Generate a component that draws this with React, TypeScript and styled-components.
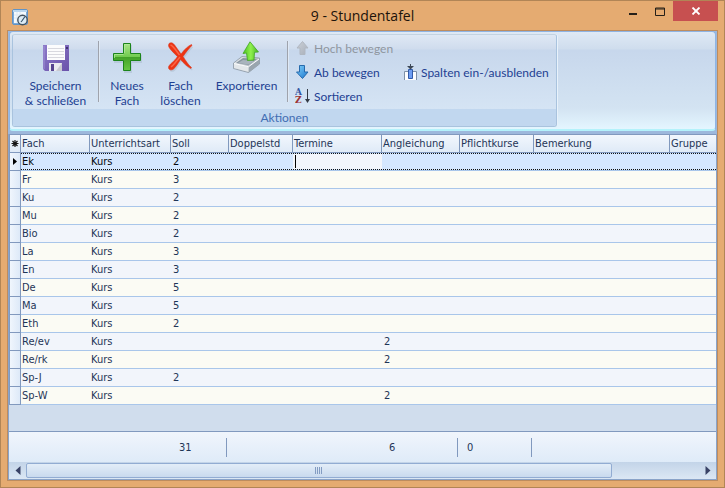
import React from "react";
import styled, { createGlobalStyle, css } from "styled-components";

const uiFont = '"Open Sans", "Noto Sans", sans-serif';
const ribbonFont = 'Lato, "Open Sans", sans-serif';
const gridFont = '"DejaVu Sans Condensed", "DejaVu Sans", sans-serif';
const line = "#8aa3c8";

const GlobalStyle = createGlobalStyle`
  * { box-sizing: border-box; }
  body { margin: 0; background: #e5ab71; font-family: ${uiFont}; }
  button { border: 0; padding: 0; margin: 0; background: none; font: inherit; color: inherit; cursor: default; }
  svg { display: block; flex: none; }
`;

const Window = styled.div`
  display: flex;
  flex-direction: column;
  min-height: 100vh;
  padding: 0 6px 6px;
  border: 1px solid #b18556;
  background: #e5ab71;
`;

const TitleBar = styled.header`
  display: grid;
  grid-template-columns: 100px 1fr 100px;
  height: 29px;
`;

const AppIcon = styled.div`
  padding: 8px 0 0 5px;
`;

const Title = styled.h1`
  margin: 0;
  padding-top: 4px;
  font-size: 14px;
  line-height: 22px;
  font-weight: 400;
  text-align: center;
  color: #1c130b;
`;

const WindowButtons = styled.div`
  display: flex;
  justify-content: flex-end;
  align-items: flex-start;
`;

const WindowButton = styled.button<{ $close?: boolean }>`
  display: flex;
  align-items: center;
  justify-content: center;
  width: ${(p) => (p.$close ? 45 : 27)}px;
  height: 20px;
  background: ${(p) => (p.$close ? "#c75050" : "transparent")};
`;

const Client = styled.main`
  display: flex;
  flex-direction: column;
  flex: 1;
  border: 1px solid #bd8c5f;
  background: #9db8dc;
`;

const Ribbon = styled.section`
  display: flex;
  margin: 0 1px 3px;
  padding: 2px;
  border: 1px solid #8fb4e3;
  border-bottom: 2px solid #b4f2fb;
  border-radius: 4px;
  background: linear-gradient(#dfe9f5 0, #cfdded 17px, #c7d7ec 18px, #d3e3f2 76px, #e4f6ff 100%);
`;

const Group = styled.div`
  display: flex;
  flex-direction: column;
  width: 545px;
  border: 1px solid #a9c3de;
  border-top-color: #c3d3e2;
  border-radius: 3px;
  box-shadow: 1px 0 #e8f2fb;
  font-family: ${ribbonFont};
  overflow: hidden;
`;

const GroupBody = styled.div`
  display: flex;
  height: 74px;
  padding-top: 6px;
  color: #1e3f92;
  font-size: 12px;
  background: linear-gradient(#dfe8f4 0, #cfdced 14px, #c7d7ec 15px, #d5e4f4 100%);
`;

const GroupCaption = styled.div`
  height: 17px;
  font-size: 12px;
  line-height: 17px;
  text-align: center;
  color: #426db3;
  background: #c1d7ef;
`;

const LargeButton = styled.button<{ $width: number }>`
  display: flex;
  flex-direction: column;
  align-items: center;
  gap: 5px;
  width: ${(p) => p.$width}px;
  height: 67px;
  line-height: 15px;
  white-space: pre-line;
  text-align: center;
`;

const Divider = styled.div`
  width: 1px;
  height: 61px;
  background: #9fa3ac;
  box-shadow: 1px 0 #dfe9f5;
`;

const CommandColumn = styled.div<{ $single?: boolean }>`
  display: flex;
  flex-direction: column;
  justify-content: ${(p) => (p.$single ? "center" : "flex-start")};
  height: 72px;
  padding-left: 7px;
  width: ${(p) => (p.$single ? 150 : 109)}px;
  margin-top: -5px;
`;

const SmallButton = styled.button`
  display: flex;
  align-items: center;
  gap: 3px;
  height: 24px;
  white-space: nowrap;
  &:disabled { color: #8f969f; }
`;

const GridArea = styled.section`
  flex: 1;
  display: flex;
  flex-direction: column;
  min-width: 0;
  border: 1px solid ${line};
  border-width: 0 1px 1px;
  background: #d0dded;
  font-family: ${gridFont};
  font-size: 11px;
  color: #1f3557;
`;

const Table = styled.table`
  width: 100%;
  table-layout: fixed;
  border-collapse: separate;
  border-spacing: 0;
`;

const HeadCell = styled.th`
  height: 19px;
  padding: 0 0 0 1px;
  border: 1px solid #8199be;
  border-left-width: 0;
  background: linear-gradient(#f2f7fd, #dfeaf7);
  font-weight: 400;
  line-height: 17px;
  text-align: left;
  white-space: nowrap;
  overflow: hidden;
  &:first-child { border-left-width: 1px; padding: 0; }
  &:last-child { border-right-width: 0; }
`;

const dots = "repeating-linear-gradient(90deg, #111 0 1px, transparent 1px 2px)";

const Row = styled.tr<{ $active: boolean }>`
  background: #f2f5fb;
  &:nth-child(even) { background: #fbfbf4; }
  ${(p) =>
    p.$active &&
    css`
      color: #05070d;
      && {
        background: ${dots} 0 0 / 100% 1px no-repeat, ${dots} 0 16px / 100% 1px no-repeat, #d5e7ff;
      }
    `}
`;

const Cell = styled.td`
  height: 18px;
  padding: 0 0 0 1px;
  border-bottom: 1px solid #a9c6ea;
  line-height: 17px;
  white-space: nowrap;
`;

const NumberCell = styled(Cell)`
  padding-left: 2px;
`;

const Indicator = styled.th`
  height: 18px;
  padding: 0;
  border: 1px solid #8199be;
  border-top: 0;
  background: linear-gradient(90deg, #f0f6fd, #dde9f8);
`;

const Editor = styled.div`
  display: flex;
  align-items: center;
  height: 15px;
  margin-left: -1px;
  padding-left: 2px;
  background: #f2f5fb;
`;

const Caret = styled.span`
  width: 1px;
  height: 13px;
  background: #000;
`;

const EditorInput = styled.input`
  flex: 1;
  min-width: 0;
  height: 13px;
  padding: 0;
  border: 0;
  outline: 0;
  background: transparent;
  font: inherit;
`;

const Totals = styled.div`
  display: grid;
  grid-template-columns: 218px 231px 74px 1fr;
  align-items: center;
  height: 31px;
  margin-top: auto;
  border-top: 1px solid #8199be;
  background: linear-gradient(#f0f5fc, #dfebf8);
`;

const Total = styled.output<{ $inset: number; $last?: boolean }>`
  height: 19px;
  line-height: 19px;
  padding-left: ${(p) => p.$inset}px;
  border-right: ${(p) => (p.$last ? 0 : 1)}px solid #8199be;
`;

const ScrollBar = styled.div`
  display: grid;
  grid-template-columns: 17px 1fr 17px;
  height: 17px;
  background: linear-gradient(#c3d4e8, #dbe7f4);
`;

const ScrollArrow = styled.button`
  display: flex;
  align-items: center;
  justify-content: center;
`;

const ScrollThumb = styled.button`
  display: flex;
  align-items: center;
  justify-content: center;
  gap: 1px;
  width: 87%;
  height: 15px;
  margin-top: 1px;
  border: 1px solid #92acd2;
  border-radius: 2px;
  background: linear-gradient(#e3edf8, #c9daee);
`;

const Grip = styled.span`
  width: 1px;
  height: 7px;
  background: #839cc2;
`;

const LogoIcon = () => (
  <svg width="17" height="17" viewBox="0 0 17 17">
    <rect x="0.5" y="0.5" width="15" height="15" rx="1.5" fill="#7daad8" stroke="#6293c5" />
    <path d="M2 3h12v11H2z" fill="#f5fafe" />
    <path d="M1 1h14v2H1z" fill="#b9d6ef" />
    <path d="M2 6h12M2 9h12M5 3v11M8 3v11" stroke="#dce8f2" />
    <circle cx="10.5" cy="11" r="4.7" fill="#dcebf5" stroke="#44525f" strokeWidth="1.4" />
    <path d="M13 7.5 10.2 11.5 9 13" fill="none" stroke="#35536d" strokeWidth="1.2" />
  </svg>
);

const SaveIcon = () => (
  <svg width="32" height="32" viewBox="0 0 32 32">
    <defs>
      <linearGradient id="disk" x1="0" y1="0" x2="1" y2="1">
        <stop offset="0" stopColor="#8c7ac9" />
        <stop offset="1" stopColor="#6a52aa" />
      </linearGradient>
    </defs>
    <path d="M3 4h26v26H5l-2-2z" fill="url(#disk)" />
    <path d="M4 5v23" stroke="#a091d4" />
    <path d="M7 4h18v15H7z" fill="#fcfcfd" />
    <path d="M8 7.5h16M8 10.5h16M8 13.5h16M8 16.5h16" stroke="#d8d8df" />
    <path d="M26 6h2v2h-2z" fill="#41336f" />
    <path d="M9 22h13v8H9z" fill="#ececf0" />
    <path d="M11 23h3v7h-3z" fill="#57448f" />
    <path d="M16 30l6-8v8z" fill="#c9cad1" />
  </svg>
);

const AddIcon = () => (
  <svg width="32" height="32" viewBox="0 0 32 32">
    <defs>
      <linearGradient id="plus" x1="0" y1="0" x2="0" y2="1">
        <stop offset="0" stopColor="#a9e488" />
        <stop offset="0.49" stopColor="#72cc50" />
        <stop offset="0.5" stopColor="#42a127" />
        <stop offset="1" stopColor="#67c744" />
      </linearGradient>
    </defs>
    <path d="M13 4h8v10h10v8H21v10h-8V22H3v-8h10z" fill="#8fa5b6" opacity=".3" />
    <path d="M12.500 2.500h7v10h10v7h-10v10h-7v-10h-10v-7h10z" fill="url(#plus)" stroke="#1c841b" />
    <path d="M13.500 12V3.500h5M3.500 17v-3.500h9" fill="none" stroke="#b6eca0" opacity=".7" />
  </svg>
);

const DeleteIcon = () => (
  <svg width="32" height="32" viewBox="0 0 32 32">
    <path
      d="M4 2.500C7 .5 9 3 11 6l5 7c4-5 7-8 10.500-9.500l.5 1c-3.500 3-6 7-9 11 3 4.500 5 8 8.500 11l-.5 1c-4-2-7-5-10.500-9-2.500 4-5 8-7 9.500-2 1.500-5 1-5-1.500 0-3 6-6 9-11-4-4-9-8.500-9-11 0-1 .5-1.500.5-2z"
      fill="#9cabbb"
      opacity=".35"
      transform="translate(1 2)"
    />
    <path
      d="M4 2.500C7 .5 9 3 11 6l5 7c4-5 7-8 10.500-9.500l.5 1c-3.500 3-6 7-9 11 3 4.500 5 8 8.500 11l-.5 1c-4-2-7-5-10.500-9-2.500 4-5 8-7 9.500-2 1.500-5 1-5-1.500 0-3 6-6 9-11-4-4-9-8.500-9-11 0-1 .5-1.500.5-2z"
      fill="#ed3414"
      stroke="#d93c22"
      strokeWidth=".6"
    />
    <path d="M5.500 4c3 1 5 5 9 10M6 26c3-2 6-7 9-10" fill="none" stroke="#ff7a5c" strokeWidth="1.500" opacity=".7" />
  </svg>
);

const ExportIcon = () => (
  <svg width="32" height="32" viewBox="0 0 32 32">
    <defs>
      <linearGradient id="tray" x1="0" y1="0" x2="1" y2="1">
        <stop offset="0" stopColor="#eef1f3" />
        <stop offset="1" stopColor="#8f9ba6" />
      </linearGradient>
      <linearGradient id="lift" x1="0" y1="0" x2="1" y2="0">
        <stop offset="0" stopColor="#48c01f" />
        <stop offset="0.5" stopColor="#8ff04e" />
        <stop offset="1" stopColor="#45b423" />
      </linearGradient>
    </defs>
    <path d="M2.500 22 11 15.500l17.500 1.500v6l-11 8.500-15-4z" fill="url(#tray)" stroke="#8c98a3" strokeWidth=".8" />
    <path d="M5 22l7-5 14 1-8.500 6z" fill="#8996a1" />
    <path d="M7 22l5-3 11 1-5.500 3.500z" fill="#a9b4bd" />
    <path d="M3 22.500l14.500 3.500v5L3 27z" fill="#e3e7ea" />
    <path d="M18 31v-5l10-7.500v4.500z" fill="#99a5af" />
    <path d="M3 22.500l14.500 3.200L28 18" fill="none" stroke="#fafbfc" />
    <path d="M19 .8 27.500 11l-4 .3-.5 7.700-6.500.500-1-7.500-3.500.500z" fill="url(#lift)" stroke="#43a526" strokeWidth=".8" />
  </svg>
);

const ArrowIcon = ({ up }: { up?: boolean }) => (
  <svg width="16" height="16" viewBox="0 0 16 16">
    <defs>
      <linearGradient id={up ? "greyArrow" : "blueArrow"} x1="0" y1="0" x2="1" y2="1">
        <stop offset="0" stopColor={up ? "#cbd0d7" : "#82d0fa"} />
        <stop offset="1" stopColor={up ? "#a8afba" : "#1876cf"} />
      </linearGradient>
    </defs>
    {up ? (
      <path d="M7.500 1.500 13 8h-3v6.500H5V8H2z" fill="url(#greyArrow)" stroke="#b0b7c1" />
    ) : (
      <path d="M4.500 1.500h5V8h3.500L7.500 14.500 1.500 8h3z" fill="url(#blueArrow)" stroke="#276aac" />
    )}
  </svg>
);

const SortIcon = () => (
  <svg width="16" height="16" viewBox="0 0 16 16">
    <text x="0" y="7" fontFamily="DejaVu Serif, serif" fontSize="9" fontWeight="700" fill="#3557a1">A</text>
    <text x="0" y="15" fontFamily="DejaVu Serif, serif" fontSize="9" fontWeight="700" fill="#9c3333">Z</text>
    <path d="M12.500 1v12" stroke="#333944" />
    <path d="M10 11h5l-2.500 4z" fill="#333944" />
  </svg>
);

const ColumnsIcon = () => (
  <svg width="14" height="16" viewBox="0 0 14 16">
    <path d="M.5 16V7.500h12V16" fill="#fcfdfe" stroke="#7e91a8" />
    <path d="M4.500 14.500v-9h4v9z" fill="#6d9df2" stroke="#315aa9" />
    <path d="M3.500 2.500h6M6.500 0v5" stroke="#3d4856" />
    <path d="M4 3h5L6.500 5.500z" fill="#3d4856" />
  </svg>
);

const MarkIcon = () => (
  <svg width="10" height="9" viewBox="0 0 10 9">
    <path d="M5 1v7M1.500 4.500h7M2.500 2l5 5M7.500 2l-5 5" stroke="#151515" strokeWidth="1.200" />
  </svg>
);

const Triangle = ({ left, small }: { left?: boolean; small?: boolean }) => (
  <svg width={small ? 10 : 6} height="9" viewBox={small ? "-3 0 10 9" : "0 0 6 9"}>
    <path
      d={left ? "M5.500 0v9L.5 4.500z" : small ? "M0 1v7l4-3.500z" : "M.5 0v9l5-4.500z"}
      fill={small ? "#000" : "#394266"}
    />
  </svg>
);

const columns: { name: string; width?: number }[] = [
  { name: "Fach", width: 69 },
  { name: "Unterrichtsart", width: 81 },
  { name: "Soll", width: 58 },
  { name: "Doppelstd", width: 64 },
  { name: "Termine", width: 89 },
  { name: "Angleichung", width: 78 },
  { name: "Pflichtkurse", width: 74 },
  { name: "Bemerkung", width: 136 },
  { name: "Gruppe" },
];

const subjects = [
  { name: "Ek", hours: 2 },
  { name: "Fr", hours: 3 },
  { name: "Ku", hours: 2 },
  { name: "Mu", hours: 2 },
  { name: "Bio", hours: 2 },
  { name: "La", hours: 3 },
  { name: "En", hours: 3 },
  { name: "De", hours: 5 },
  { name: "Ma", hours: 5 },
  { name: "Eth", hours: 2 },
  { name: "Re/ev", aligned: 2 },
  { name: "Re/rk", aligned: 2 },
  { name: "Sp-J", hours: 2 },
  { name: "Sp-W", aligned: 2 },
];

const SubjectTable = () => (
  <Table>
    <colgroup>
      <col style={{ width: 12 }} />
      {columns.map((c) => (
        <col key={c.name} style={{ width: c.width }} />
      ))}
    </colgroup>
    <thead>
      <tr>
        <HeadCell scope="col" aria-label="Zeile"><MarkIcon /></HeadCell>
        {columns.map((c) => (
          <HeadCell key={c.name} scope="col">{c.name}</HeadCell>
        ))}
      </tr>
    </thead>
    <tbody>
      {subjects.map((s, i) => (
        <Row key={s.name} $active={i === 0}>
          <Indicator>{i === 0 && <Triangle small />}</Indicator>
          <Cell>{s.name}</Cell>
          <Cell>Kurs</Cell>
          <NumberCell>{s.hours}</NumberCell>
          <Cell />
          <Cell>
            {i === 0 && (
              <Editor>
                <Caret />
                <EditorInput aria-label="Termine" />
              </Editor>
            )}
          </Cell>
          <NumberCell>{s.aligned}</NumberCell>
          <Cell />
          <Cell />
          <Cell />
        </Row>
      ))}
    </tbody>
  </Table>
);

export default function App() {
  return (
    <>
      <GlobalStyle />
      <Window>
        <TitleBar>
          <AppIcon><LogoIcon /></AppIcon>
          <Title>9 - Stundentafel</Title>
          <WindowButtons>
            <WindowButton aria-label="Minimieren">
              <svg width="10" height="10" viewBox="0 0 10 10"><path d="M1 7h8v2H1z" fill="#252019" /></svg>
            </WindowButton>
            <WindowButton aria-label="Maximieren">
              <svg width="10" height="10" viewBox="0 0 10 10"><path d="M.5 2h9v7.500h-9z M0 3h10" fill="none" stroke="#252019" /></svg>
            </WindowButton>
            <WindowButton $close aria-label="Schließen">
              <svg width="10" height="8" viewBox="0 0 10 8"><path d="m1.500.5 7 7m0-7-7 7" stroke="#fff" strokeWidth="1.800" /></svg>
            </WindowButton>
          </WindowButtons>
        </TitleBar>
        <Client>
          <Ribbon>
            <Group>
              <GroupBody>
                <LargeButton $width={85}><SaveIcon />{"Speichern\n& schließen"}</LargeButton>
                <Divider />
                <LargeButton $width={56}><AddIcon />{"Neues\nFach"}</LargeButton>
                <LargeButton $width={51}><DeleteIcon />{"Fach\nlöschen"}</LargeButton>
                <LargeButton $width={81}><ExportIcon />Exportieren</LargeButton>
                <Divider />
                <CommandColumn>
                  <SmallButton disabled><ArrowIcon up />Hoch bewegen</SmallButton>
                  <SmallButton><ArrowIcon />Ab bewegen</SmallButton>
                  <SmallButton><SortIcon />Sortieren</SmallButton>
                </CommandColumn>
                <CommandColumn $single>
                  <SmallButton><ColumnsIcon />Spalten ein-/ausblenden</SmallButton>
                </CommandColumn>
              </GroupBody>
              <GroupCaption>Aktionen</GroupCaption>
            </Group>
          </Ribbon>
          <GridArea>
            <SubjectTable />
            <Totals>
              <Total $inset={170}>31</Total>
              <Total $inset={162}>6</Total>
              <Total $inset={9}>0</Total>
              <Total $inset={0} $last />
            </Totals>
            <ScrollBar>
              <ScrollArrow aria-label="Nach links"><Triangle left /></ScrollArrow>
              <ScrollThumb aria-label="Horizontal scrollen"><Grip /><Grip /><Grip /><Grip /></ScrollThumb>
              <ScrollArrow aria-label="Nach rechts"><Triangle /></ScrollArrow>
            </ScrollBar>
          </GridArea>
        </Client>
      </Window>
    </>
  );
}
